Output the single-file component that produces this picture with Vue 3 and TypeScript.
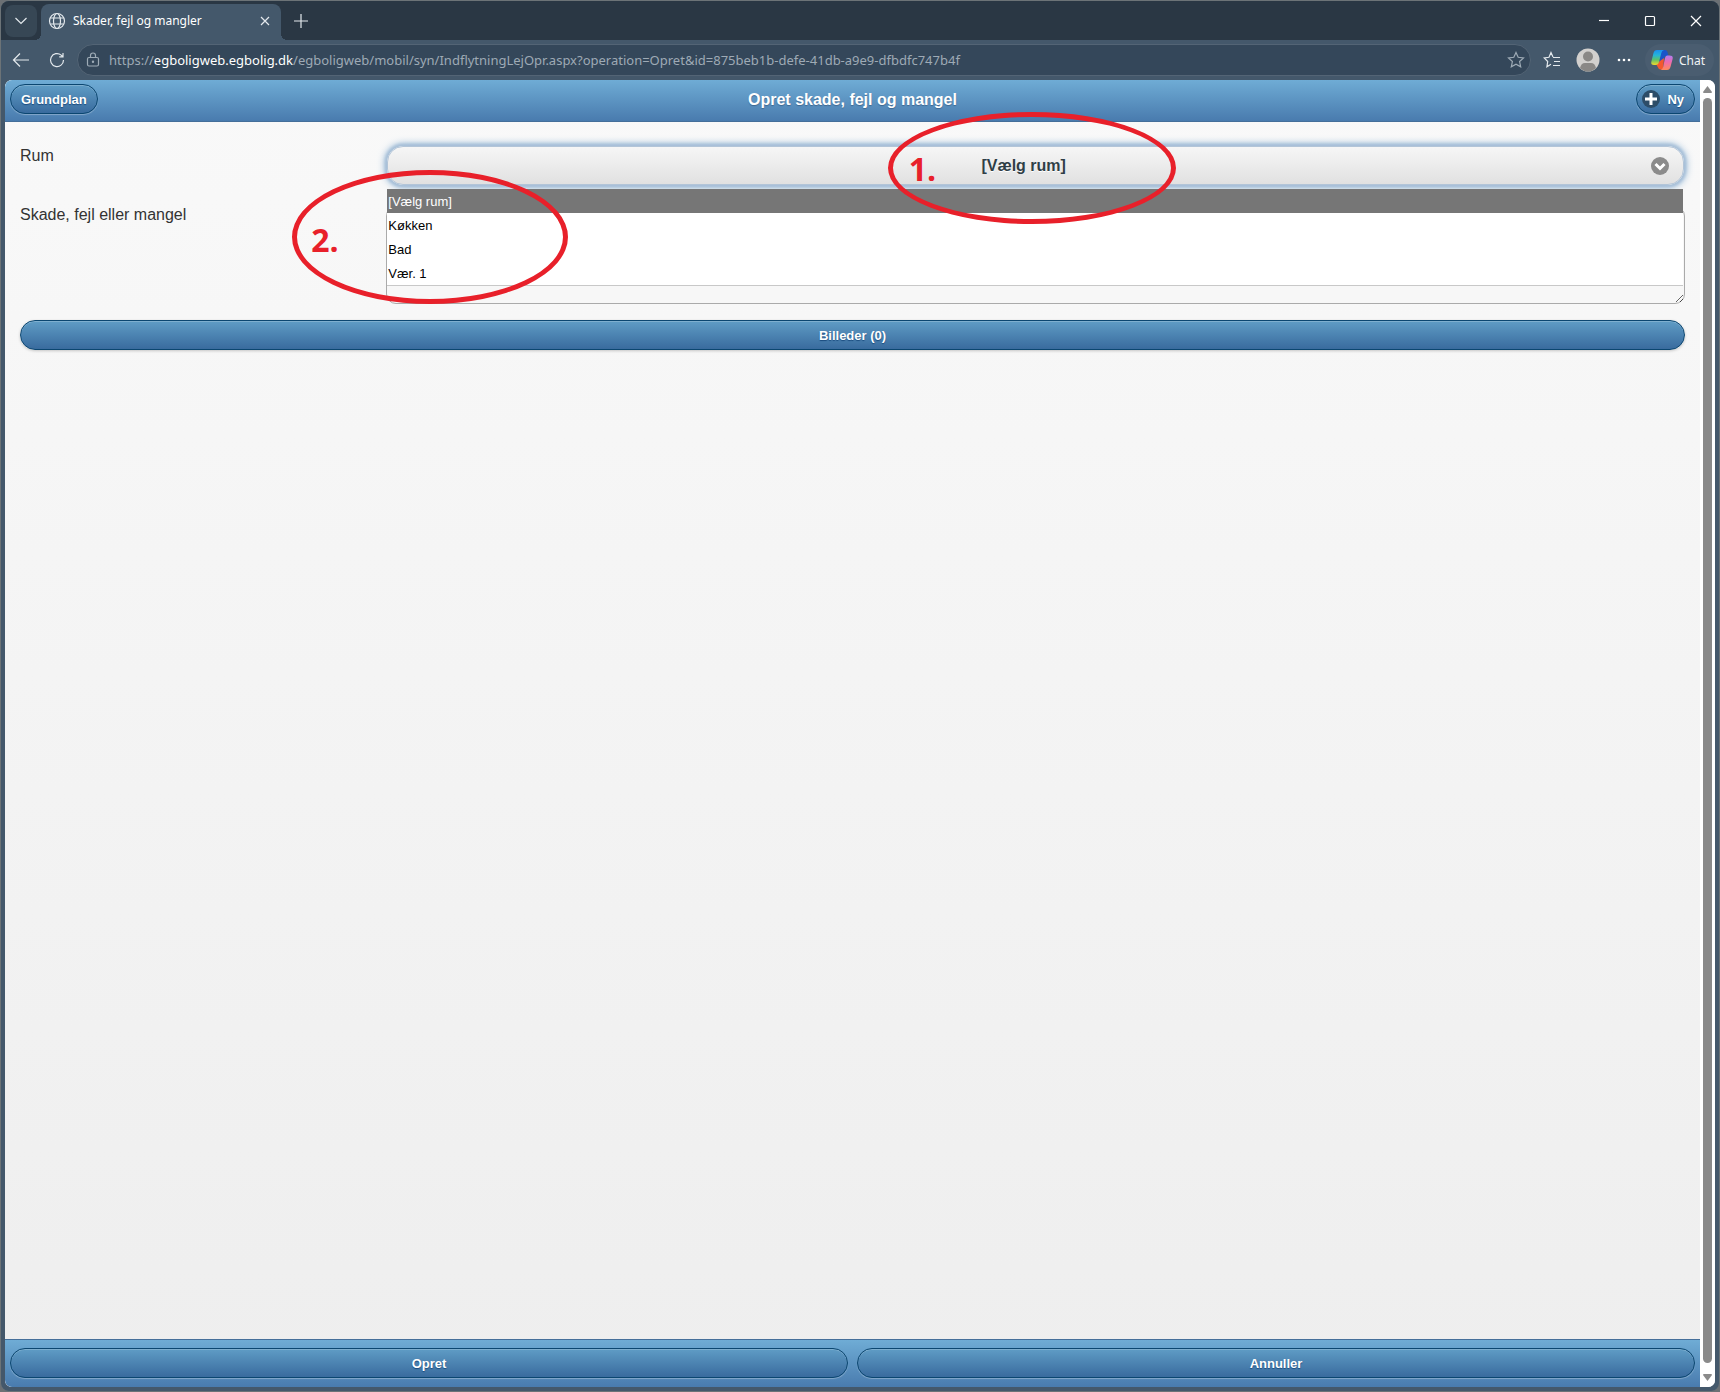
<script setup lang="ts">
import { ref } from 'vue'

const rooms: string[] = ['[Vælg rum]', 'Køkken', 'Bad', 'Vær. 1']
const room = ref(rooms[0])
const description = ref('')
</script>

<template>
  <div class="window">
    <div class="titlebar">
      <button class="tab-menu" aria-label="Faner">
        <svg width="14" height="8" viewBox="0 0 14 8"><path d="M1.500 1L7 6.500L12.500 1" /></svg>
      </button>
      <div class="tab">
        <svg class="globe" width="18" height="18" viewBox="0 0 18 18">
          <circle cx="9" cy="9" r="7.500" /><ellipse cx="9" cy="9" rx="3.500" ry="7.500" />
          <path d="M2.300 6H15.700M2.300 12H15.700" />
        </svg>
        <span class="tab-title">Skader, fejl og mangler</span>
        <button class="plain" aria-label="Luk fane">
          <svg width="10" height="10" viewBox="0 0 10 10"><path d="M1 1L9 9M9 1L1 9" /></svg>
        </button>
      </div>
      <button class="plain new-tab" aria-label="Ny fane">
        <svg width="16" height="16" viewBox="0 0 16 16"><path d="M8 1V15M1 8H15" /></svg>
      </button>
      <div class="window-controls">
        <button class="plain" aria-label="Minimer"><svg width="12" height="12" viewBox="0 0 12 12"><path d="M1 5.500H11" /></svg></button>
        <button class="plain" aria-label="Maksimer"><svg width="12" height="12" viewBox="0 0 12 12"><rect x="1.500" y="1.500" width="9" height="9" rx="1" /></svg></button>
        <button class="plain" aria-label="Luk"><svg width="12" height="12" viewBox="0 0 12 12"><path d="M1 1L11 11M11 1L1 11" /></svg></button>
      </div>
    </div>

    <div class="toolbar">
      <button class="plain" aria-label="Tilbage">
        <svg width="18" height="16" viewBox="0 0 18 16"><path d="M17 8H1.500M8 1.500L1.500 8L8 14.500" /></svg>
      </button>
      <button class="plain reload" aria-label="Opdater">
        <svg width="16" height="16" viewBox="0 0 16 16"><path d="M14.500 8A6.500 6.500 0 1 1 12.200 3.100L14 4.800M14 1V4.800H10.200" /></svg>
      </button>
      <div class="address">
        <svg class="lock" width="14" height="16" viewBox="0 0 14 16">
          <rect x="1.500" y="5.500" width="11" height="8.500" rx="1.500" />
          <path d="M4.500 5.500V3.500A2.500 2.500 0 0 1 9.500 3.500V5.500" /><circle cx="7" cy="9.700" r=".6" />
        </svg>
        <span class="url">https://<b>egboligweb.egbolig.dk</b>/egboligweb/mobil/syn/IndflytningLejOpr.aspx?operation=Opret&amp;id=875beb1b-defe-41db-a9e9-dfbdfc747b4f</span>
        <button class="plain star" aria-label="Føj til favoritter">
          <svg width="18" height="18" viewBox="0 0 18 18"><path d="M9 1.500L11.200 6.300L16.500 6.900L12.600 10.500L13.700 15.800L9 13.200L4.300 15.800L5.400 10.500L1.500 6.900L6.800 6.300Z" /></svg>
        </button>
      </div>
      <button class="plain favourites" aria-label="Favoritter">
        <svg width="18" height="18" viewBox="0 0 18 18"><path d="M10 5.900L8 1.500L6 6.300L1.200 6.900L4.700 10.500L3.900 15.800L8 13.300M10 6.500H17M11 10.500H17M10 14.500H17" /></svg>
      </button>
      <button class="plain" aria-label="Profil">
        <svg class="avatar" width="24" height="24" viewBox="0 0 24 24">
          <circle cx="12" cy="12" r="11.500" fill="#d2d0ce" /><circle cx="12" cy="8.500" r="5" fill="#8a8886" />
          <path d="M4 20.200Q5 15 9 15H15Q19 15 20 20.200Q12 27 4 20.200Z" fill="#8a8886" />
        </svg>
      </button>
      <button class="plain more" aria-label="Mere">
        <svg class="dots" width="14" height="4" viewBox="0 0 14 4"><circle cx="2" cy="2" r="1.300" /><circle cx="7" cy="2" r="1.300" /><circle cx="12" cy="2" r="1.300" /></svg>
      </button>
      <button class="chat">
        <svg class="copilot" width="22" height="22" viewBox="0 0 22 22">
          <defs>
            <linearGradient id="cool" x1="0" y1="0" x2="0" y2="1"><stop offset="0" stop-color="#1a8ff0" /><stop offset=".35" stop-color="#25b5d8" /><stop offset=".65" stop-color="#5cc26a" /><stop offset="1" stop-color="#f2d92c" /></linearGradient>
            <linearGradient id="warm" x1="0" y1="0" x2="0" y2="1"><stop offset="0" stop-color="#b07cf0" /><stop offset=".45" stop-color="#ee6bb0" /><stop offset="1" stop-color="#ff8a5c" /></linearGradient>
          </defs>
          <path d="M9 1H14Q16 1 16.500 3L17.500 7H14L11 15H7Z" fill="#1a55c8" />
          <path d="M5 15L13 9L12 20.500H9.500Q7.500 20.500 7 18.500Z" fill="#f4582f" />
          <path d="M6 1H13Q11 1.500 10.300 4L8 13Q7.300 16 4.500 16H3Q-.5 16 .4 12.500L2.500 4Q3.300 1 6 1Z" fill="url(#cool)" />
          <path d="M16 6.500H18.500Q22.500 6.500 21.600 10L19.600 17.500Q18.700 21 16 21H9.500Q11.500 20.500 12.200 18L14 9Q14.500 6.500 16 6.500Z" fill="url(#warm)" />
        </svg>
        Chat
      </button>
    </div>

    <div class="viewport">
      <div class="page">
        <header class="bar page-header">
          <button class="blue">Grundplan</button>
          <h1>Opret skade, fejl og mangel</h1>
          <button class="blue new">
            <svg width="18" height="18" viewBox="0 0 18 18"><circle cx="9" cy="9" r="9" fill="#2d4d68" /><path d="M9 3V15M3 9H15" stroke="#fff" stroke-width="3" /></svg>
            Ny
          </button>
        </header>

        <main>
          <div class="field">
            <label for="room">Rum</label>
            <div class="control">
              <select id="room" v-model="room">
                <option v-for="r in rooms" :key="r">{{ r }}</option>
              </select>
              <svg class="chevron" width="18" height="18" viewBox="0 0 18 18"><circle cx="9" cy="9" r="9" fill="#8b8b8b" /><path d="M4.500 7L9 11.500L13.500 7" stroke="#fff" stroke-width="3" fill="none" /></svg>
              <ul class="options" role="listbox" aria-label="Rum">
                <li v-for="r in rooms" :key="r" role="option" :aria-selected="r === room" @click="room = r">{{ r }}</li>
              </ul>
              <div class="mark mark-one">1.</div>
              <div class="mark mark-two">2.</div>
            </div>
          </div>
          <div class="field">
            <label for="description">Skade, fejl eller mangel</label>
            <div class="control"><textarea id="description" v-model="description"></textarea></div>
          </div>
          <button class="blue pictures">Billeder (0)</button>
        </main>

        <footer class="bar page-footer">
          <button class="blue">Opret</button>
          <button class="blue">Annuller</button>
        </footer>
      </div>
      <div class="scrollbar">
        <svg width="9" height="7" viewBox="0 0 9 7"><path d="M4.500 0L9 6Q9 7 8 7H1Q0 7 0 6Z" /></svg>
        <div class="thumb"></div>
        <svg width="9" height="7" viewBox="0 0 9 7"><path d="M4.500 7L9 1Q9 0 8 0H1Q0 0 0 1Z" /></svg>
      </div>
    </div>
  </div>
</template>

<style>
body {
  margin: 0;
  background: #6c7074;
}
</style>

<style scoped>
* {
  box-sizing: border-box;
}
.window {
  display: flex;
  flex-direction: column;
  min-height: 100vh;
  padding: 0 4px 4px;
  border: 1px solid #6c7377;
  border-radius: 9px;
  background: #44586b;
  font-family: "Noto Sans", "Open Sans", sans-serif;
}
button {
  font: inherit;
  cursor: pointer;
}
.plain {
  display: flex;
  align-items: center;
  justify-content: center;
  padding: 0;
  border: 0;
  background: none;
}
.titlebar svg,
.toolbar svg {
  fill: none;
  stroke: #e4e9ed;
  stroke-width: 1.2;
}
.titlebar {
  display: flex;
  align-items: flex-end;
  height: 39px;
  margin: 0 -4px;
  padding: 0 17px 0 4px;
  border-radius: 8px 8px 0 0;
  background: #2a3744;
}
.tab-menu {
  align-self: center;
  width: 32px;
  height: 32px;
  padding: 0 0 4px;
  border: 0;
  border-radius: 8px;
  background: #374755;
}
.tab {
  position: relative;
  display: flex;
  align-items: center;
  width: 240px;
  height: 36px;
  margin-left: 4px;
  padding: 0 11px 3px 7px;
  border-radius: 8px 8px 0 0;
  background: #44586b;
  color: #fff;
}
.tab::before,
.tab::after {
  content: "";
  position: absolute;
  bottom: 0;
  width: 6px;
  height: 6px;
}
.tab::before {
  right: 100%;
  background: radial-gradient(circle at 0 0, #2a3744 6px, #44586b 6px);
}
.tab::after {
  left: 100%;
  background: radial-gradient(circle at 100% 0, #2a3744 6px, #44586b 6px);
}
.tab-title {
  flex: 1;
  margin-left: 7px;
  font-size: 12px;
  white-space: nowrap;
}
.new-tab {
  align-self: center;
  margin-left: 12px;
}
.window-controls {
  display: flex;
  align-self: center;
  gap: 34px;
  margin-left: auto;
}
.window-controls svg {
  stroke: #fff;
}
.toolbar {
  display: flex;
  align-items: center;
  height: 40px;
  padding: 0 1px 0 7px;
}
.reload {
  margin-left: 19px;
}
.address {
  display: flex;
  flex: 1;
  align-items: center;
  height: 32px;
  min-width: 0;
  margin-left: 12px;
  padding: 0 5px 0 8px;
  border: 1px solid #536475;
  border-radius: 16px;
  background: #34475a;
}
.address svg {
  stroke: #9eabb6;
}
.url {
  flex: 1;
  min-width: 0;
  margin-left: 9px;
  overflow: hidden;
  color: #9eaab5;
  font-size: 13px;
  line-height: 20px;
  white-space: nowrap;
}
.url b {
  color: #fff;
  font-weight: 400;
}
.favourites {
  margin-left: 12px;
}
.favourites + .plain {
  margin-left: 15px;
}
.toolbar .avatar,
.toolbar .copilot {
  stroke: none;
}
.more {
  margin-left: 17px;
}
.toolbar .dots {
  fill: #fff;
  stroke: none;
}
.chat {
  display: flex;
  align-items: center;
  gap: 6px;
  width: 69px;
  height: 32px;
  margin-left: 14px;
  padding: 0 0 0 6px;
  border: 0;
  border-radius: 16px;
  background: #4a5d70;
  color: #f1f4f6;
  font-size: 12px;
}
.viewport {
  display: flex;
  flex: 1;
  overflow: hidden;
  border-radius: 7px;
  background: #fff;
}
.page {
  display: flex;
  flex: 1;
  flex-direction: column;
  background: linear-gradient(#f9f9f9, #eeeeee);
  color: #333;
  font-family: "Liberation Sans", Arial, sans-serif;
  font-size: 16px;
}
.bar {
  display: flex;
  background: linear-gradient(#6facd5, #497bae);
}
.page-header {
  align-items: flex-start;
  justify-content: space-between;
  height: 42px;
  padding: 4px 5px;
  border-bottom: 1px solid #456f9a;
}
h1 {
  position: absolute;
  left: 5px;
  right: 20px;
  width: 300px;
  margin: 0 auto;
  color: #fff;
  font-size: 16px;
  line-height: 31px;
  text-align: center;
  text-shadow: 0 1px 1px #3e6790;
}
.blue {
  height: 30px;
  padding: 0 10px;
  border: 1px solid #0b4670;
  border-radius: 15px;
  background: linear-gradient(#5f9cc5, #396b9e);
  box-shadow: inset 0 1px 0 rgba(255, 255, 255, 0.2), 0 1px 1px rgba(255, 255, 255, 0.3);
  color: #fff;
  font-size: 13px;
  font-weight: 700;
  text-shadow: 0 1px 1px #194b7e;
}
.new {
  display: flex;
  align-items: center;
  gap: 7px;
  padding: 0 10px 0 5px;
}
main {
  flex: 1;
  padding: 15px;
}
.field {
  display: flex;
  align-items: flex-start;
}
.field label {
  width: 22%;
  padding-top: 9px;
  line-height: 20px;
}
.control {
  position: relative;
  width: 78%;
}
.field:first-child .control {
  height: 59px;
  padding: 9px 1px;
}
select {
  display: block;
  width: 100%;
  height: 39px;
  padding: 0 36px 0 12px;
  appearance: none;
  border: 1px solid #b3c5d8;
  border-radius: 16px;
  outline: 0;
  background: linear-gradient(#f6f6f6, #e1e1e1);
  box-shadow: 0 0 3px 2px #a9c0d8, 0 0 9px 1px #6f9fca;
  color: #2f3e46;
  font: 700 16px "Liberation Sans", Arial, sans-serif;
  text-align: center;
  text-align-last: center;
  text-shadow: 0 1px 0 #fff;
}
.chevron {
  position: absolute;
  top: 20px;
  right: 16px;
  pointer-events: none;
}
.options {
  position: absolute;
  z-index: 1;
  top: 52px;
  left: 1px;
  right: 2px;
  margin: 0;
  padding: 0;
  border-bottom: 1px solid #c8c8c8;
  background: #fff;
  color: #000;
  font-size: 13px;
  line-height: 22px;
  list-style: none;
}
.options li {
  padding: 2px 0 0 1px;
}
.options li[aria-selected="true"] {
  background: #767676;
  color: #fff;
}
textarea {
  display: block;
  width: 100%;
  height: 98px;
  margin-top: 10px;
  padding: 6px;
  border: 1px solid #aaa;
  border-radius: 10px;
  outline: 0;
  background: #f7f7f7;
  font: 16px "Liberation Sans", Arial, sans-serif;
}
.pictures {
  display: block;
  width: 100%;
  margin-top: 16px;
  box-shadow: inset 0 1px 0 rgba(255, 255, 255, 0.2), 0 1px 3px rgba(0, 0, 0, 0.2);
}
.page-footer {
  gap: 9px;
  height: 48px;
  padding: 8px 5px;
  border-top: 1px solid #456f9a;
}
.page-footer .blue {
  flex: 1;
}
/* Numbered guide rings over the form */
.mark {
  position: absolute;
  z-index: 2;
  border: 5px solid #e8202a;
  border-radius: 50%;
  color: #e8202a;
  font: 700 32px "Open Sans", "Noto Sans", sans-serif;
  pointer-events: none;
}
.mark-one {
  top: -25px;
  left: calc(50% - 148px);
  width: 288px;
  height: 112px;
  padding-left: 16px;
  line-height: 104px;
}
.mark-two {
  top: 33px;
  left: -94px;
  width: 276px;
  height: 134px;
  padding-left: 14px;
  line-height: 130px;
}
.scrollbar {
  display: flex;
  flex-direction: column;
  align-items: center;
  justify-content: space-between;
  width: 15px;
  padding: 6px 0;
  background: #fff;
}
.scrollbar svg {
  fill: #8a8a8a;
}
.thumb {
  flex: 1;
  width: 9px;
  margin: 5px 0 11px;
  border-radius: 5px;
  background: #8a8a8a;
}
</style>
